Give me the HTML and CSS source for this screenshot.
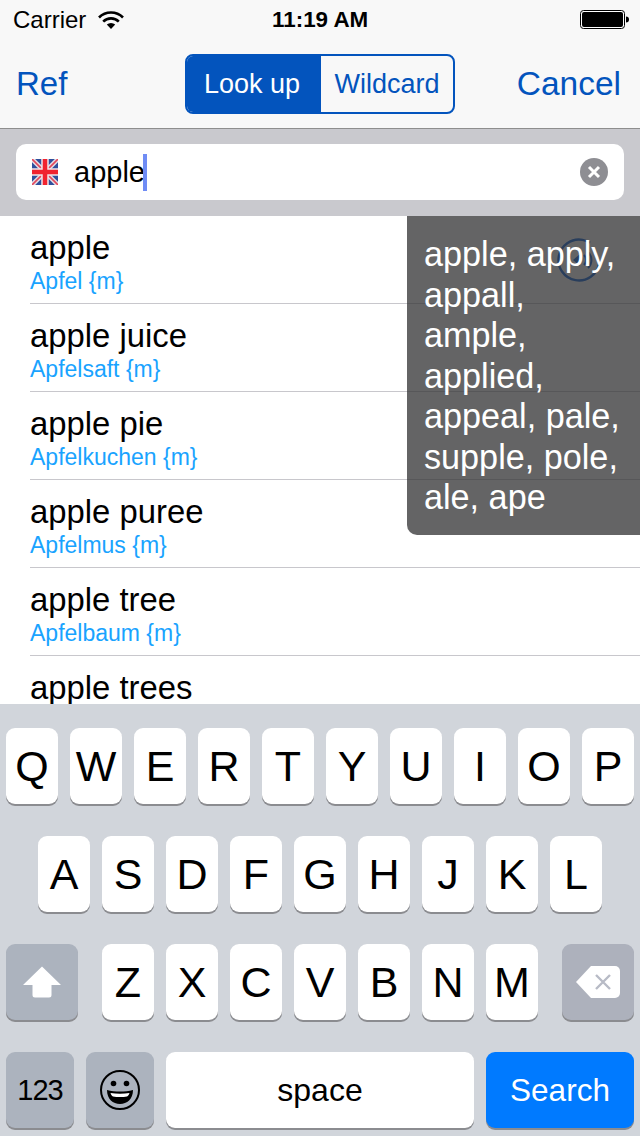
FILE: index.html
```html
<!DOCTYPE html>
<html lang="en">
<head>
  <meta charset="UTF-8" />
  <meta name="viewport" content="width=device-width, initial-scale=1.0" />
  <title>Dictionary search</title>
  <link rel="stylesheet" href="styles.css">
</head>
<body>
  <div class="phone">
    <div class="status-bar">
      <div class="status-left">
        <span>Carrier</span>
        <svg class="wifi" width="26" height="20" viewBox="0 0 26 20">
          <path d="M1 7.5a17 17 0 0 1 24 0" fill="none" stroke="#000" stroke-width="2.6"/>
          <path d="M5.2 11.6a11 11 0 0 1 15.6 0" fill="none" stroke="#000" stroke-width="2.6"/>
          <path d="M13 19l-4.2-4.4a6 6 0 0 1 8.4 0z" fill="#000"/>
        </svg>
      </div>
      <span class="time">11:19 AM</span>
      <svg class="battery" width="49" height="20" viewBox="0 0 49 20">
        <rect x="0.5" y="0.5" width="44" height="18" rx="3" fill="#fff" stroke="#000"/>
        <rect x="2" y="2" width="41" height="15" rx="2" fill="#000"/>
        <path d="M46 6.5c2 0 3 1 3 3s-1 3-3 3z" fill="#000"/>
      </svg>
    </div>

    <div class="nav-bar">
      <span class="nav-link nav-ref">Ref</span>
      <div class="segments">
        <span class="segment active">Look up</span>
        <span class="segment">Wildcard</span>
      </div>
      <span class="nav-link nav-cancel">Cancel</span>
    </div>

    <div class="search-bar">
      <div class="search-field">
        <svg class="flag" width="26" height="26" viewBox="0 0 26 26">
          <rect width="26" height="26" fill="#2f4f9c"/>
          <path d="M0 0L26 26M26 0L0 26" stroke="#e4dfe6" stroke-width="4.500"/>
          <path d="M0 0L26 26M26 0L0 26" stroke="#e2485c" stroke-width="1.600"/>
          <path d="M13 0V26M0 13H26" stroke="#f0e6ea" stroke-width="7.500"/>
          <path d="M13 0V26M0 13H26" stroke="#f0232f" stroke-width="4.500"/>
        </svg>
        <span class="query">apple</span><span class="cursor"></span>
        <span class="clear">
          <svg width="28" height="28" viewBox="0 0 28 28">
            <circle cx="14" cy="14" r="14" fill="#8e8e93"/>
            <path d="M9 9L19 19M19 9L9 19" stroke="#fff" stroke-width="3"/>
          </svg>
        </span>
      </div>
    </div>

    <div class="results">
      <div class="result">
        <div class="result-inner">
          <div>
            <div class="word">apple</div>
            <div class="translation">Apfel {m}</div>
          </div>
          <svg class="speaker" width="44" height="44" viewBox="0 0 44 44">
            <circle cx="22" cy="22" r="20.500" fill="none" stroke="#0a5fd8" stroke-width="2.400" stroke-dasharray="104 25" transform="rotate(10 22 22)"/>
            <path d="M16 22l7-6v12z" fill="#0a5fd8"/>
            <path d="M27 17a7 7 0 0 1 0 10M31 14a11 11 0 0 1 0 16" fill="none" stroke="#0a5fd8" stroke-width="2"/>
          </svg>
        </div>
      </div>
      <div class="result">
        <div class="result-inner">
          <div>
            <div class="word">apple juice</div>
            <div class="translation">Apfelsaft {m}</div>
          </div>
        </div>
      </div>
      <div class="result">
        <div class="result-inner">
          <div>
            <div class="word">apple pie</div>
            <div class="translation">Apfelkuchen {m}</div>
          </div>
        </div>
      </div>
      <div class="result">
        <div class="result-inner">
          <div>
            <div class="word">apple puree</div>
            <div class="translation">Apfelmus {m}</div>
          </div>
        </div>
      </div>
      <div class="result">
        <div class="result-inner">
          <div>
            <div class="word">apple tree</div>
            <div class="translation">Apfelbaum {m}</div>
          </div>
        </div>
      </div>
      <div class="result">
        <div class="result-inner">
          <div>
            <div class="word">apple trees</div>
          </div>
        </div>
      </div>

      <div class="suggestions">apple, apply, appall, ample, applied, appeal, pale, supple, pole, ale, ape</div>
    </div>

    <div class="keyboard">
      <div class="key-row">
        <span class="key">Q</span><span class="key">W</span><span class="key">E</span><span class="key">R</span><span class="key">T</span><span class="key">Y</span><span class="key">U</span><span class="key">I</span><span class="key">O</span><span class="key">P</span>
      </div>
      <div class="key-row row-middle">
        <span class="key">A</span><span class="key">S</span><span class="key">D</span><span class="key">F</span><span class="key">G</span><span class="key">H</span><span class="key">J</span><span class="key">K</span><span class="key">L</span>
      </div>
      <div class="key-row row-third">
        <span class="key key-mod key-wide">
          <svg width="38" height="32" viewBox="0 0 38 32">
            <path d="M19 0.5L38 19H28.500V29a2.500 2.500 0 0 1-2.500 2.500H12A2.500 2.500 0 0 1 9.500 29V19H0z" fill="#fff"/>
          </svg>
        </span>
        <div class="letters">
          <span class="key">Z</span><span class="key">X</span><span class="key">C</span><span class="key">V</span><span class="key">B</span><span class="key">N</span><span class="key">M</span>
        </div>
        <span class="key key-delete key-wide">
          <svg width="44" height="32" viewBox="0 0 44 32">
            <path d="M15 0H39a5 5 0 0 1 5 5V27a5 5 0 0 1-5 5H15L0 16z" fill="#fff"/>
            <path d="M20 9L34 23M34 9L20 23" stroke="#b8bbc6" stroke-width="2.400"/>
          </svg>
        </span>
      </div>
      <div class="key-row">
        <span class="key key-mod key-num">123</span>
        <span class="key key-mod key-emoji">
          <svg width="42" height="42" viewBox="0 0 42 42">
            <circle cx="21" cy="21" r="19" fill="none" stroke="#000" stroke-width="2"/>
            <circle cx="14.500" cy="14.500" r="2.800" fill="#000"/>
            <circle cx="27.500" cy="14.500" r="2.800" fill="#000"/>
            <path d="M8 21c8 2 18 2 26 0c0 9-6 14-13 14S8 30 8 21z" fill="#000"/>
            <path d="M11.500 24c6 1 13 1 19 0c-.5 2-1.500 3-2.500 3.500c-4 .7-10 .7-14 0c-1-.5-2-1.500-2.500-3.500z" fill="#fff"/>
          </svg>
        </span>
        <span class="key key-space">space</span>
        <span class="key key-search">Search</span>
      </div>
    </div>
  </div>
</body>
</html>
```

FILE: styles.css
```css
body {
  margin: 0;
  font-family: "Liberation Sans", Arial, sans-serif;
  background-color: #fff;
  color: #000;
}
.phone {
  width: 640px;
  height: 1136px;
  overflow: hidden;
  display: flex;
  flex-direction: column;
}

/* status bar */
.status-bar {
  height: 40px;
  padding: 0 11px 0 13px;
  background-color: #f8f8f8;
  display: flex;
  align-items: center;
  justify-content: space-between;
  position: relative;
  font-size: 24px;
}
.status-left {
  display: flex;
  align-items: center;
  gap: 12px;
}
.time {
  position: absolute;
  left: 272px;
  font-size: 22.400px;
  font-weight: bold;
}
.battery {
  display: block;
}

/* nav bar */
.nav-bar {
  height: 89px;
  padding: 0 19px 0 16px;
  box-sizing: border-box;
  background-color: #f8f8f8;
  border-bottom: 1px solid #8e8e8e;
  display: grid;
  grid-template-columns: 169px 270px 1fr;
  align-items: center;
}
.nav-link {
  font-size: 33.500px;
  color: #0354bd;
}
.nav-ref {
  font-size: 33px;
}
.nav-cancel {
  justify-self: end;
}
.segments {
  display: flex;
  height: 60px;
  box-sizing: border-box;
  border: 2px solid #0354bd;
  border-radius: 8px;
  overflow: hidden;
}
.segment {
  flex: 1;
  display: flex;
  align-items: center;
  justify-content: center;
  font-size: 27px;
  color: #0354bd;
}
.segment.active {
  flex: 0 0 134px;
  box-sizing: border-box;
  padding-right: 4px;
  background-color: #0354bd;
  color: #fff;
}

/* search */
.search-bar {
  height: 87px;
  box-sizing: border-box;
  padding: 15px 16px 16px;
  background-color: #c9c9ce;
}
.search-field {
  height: 56px;
  background-color: #fff;
  border-radius: 10px;
  padding: 0 16px;
  display: flex;
  align-items: center;
}
.flag {
  margin-right: 16px;
}
.query {
  font-size: 29px;
}
.cursor {
  width: 4px;
  height: 37px;
  margin-left: -2px;
  background-color: #6f8cf5;
}
.clear {
  margin-left: auto;
  height: 28px;
}

/* results */
.results {
  height: 488px;
  background-color: #fff;
  position: relative;
  overflow: hidden;
}
.result {
  height: 88px;
  padding-left: 30px;
}
.result-inner {
  height: 88px;
  box-sizing: border-box;
  padding: 14px 39px 0 0;
  border-bottom: 1px solid #c8c7cc;
  display: flex;
  justify-content: space-between;
}
.word {
  font-size: 32.850px;
  line-height: 36px;
}
.translation {
  font-size: 23px;
  line-height: 27px;
  margin-top: 2px;
  color: #19a3ff;
}
.speaker {
  margin-top: 8px;
}
.suggestions {
  position: absolute;
  top: 0;
  right: 0;
  width: 233px;
  height: 319px;
  box-sizing: border-box;
  padding: 18px 8px 0 17px;
  background-color: rgba(51, 51, 53, 0.76);
  border-bottom-left-radius: 10px;
  color: #fff;
  font-size: 34.200px;
  line-height: 40.500px;
}

/* keyboard */
.keyboard {
  flex: 1;
  padding: 24px 6px 0;
  background-color: #d1d5db;
  display: flex;
  flex-direction: column;
  gap: 32px;
}
.key-row {
  display: flex;
  gap: 12px;
}
.row-middle {
  padding-left: 32px;
}
.row-third {
  justify-content: space-between;
}
.letters {
  display: flex;
  gap: 12px;
}
.key {
  width: 52px;
  height: 76px;
  flex: none;
  box-sizing: border-box;
  background-color: #fff;
  border-radius: 9px;
  box-shadow: 0 2px 0 #8b8c90;
  display: flex;
  align-items: center;
  justify-content: center;
  font-size: 43px;
}
.key-mod {
  background-color: #acb3be;
}
.key-delete {
  background-color: #adb1bc;
}
.key-wide {
  width: 72px;
}
.key-num {
  width: 68px;
  font-size: 29px;
  letter-spacing: -1px;
}
.key-emoji {
  width: 68px;
}
.key-space {
  width: 308px;
  font-size: 32px;
}
.key-search {
  width: 148px;
  background-color: #007aff;
  color: #fff;
  font-size: 31.500px;
}
```
